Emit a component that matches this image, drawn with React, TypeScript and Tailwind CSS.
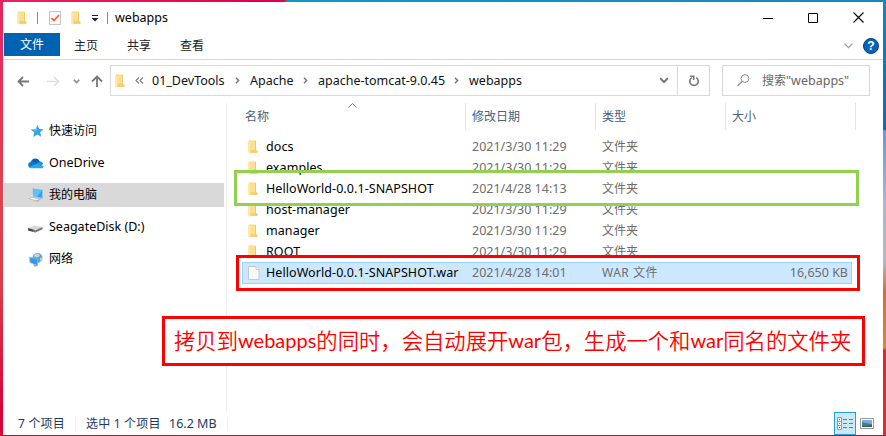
import React from 'react';

const LATIN = "font-['Noto_Sans','Noto_Sans_CJK_SC',sans-serif] text-[12.5px]";
const HAN = "font-['Noto_Sans','Noto_Sans_CJK_SC',sans-serif] text-[12px]";

type Row = { name: string; date: string; type: string; size?: string; selected?: boolean };

const rows: Row[] = [
  { name: 'docs', date: '2021/3/30 11:29', type: '文件夹' },
  { name: 'examples', date: '2021/3/30 11:29', type: '文件夹' },
  { name: 'HelloWorld-0.0.1-SNAPSHOT', date: '2021/4/28 14:13', type: '文件夹' },
  { name: 'host-manager', date: '2021/3/30 11:29', type: '文件夹' },
  { name: 'manager', date: '2021/3/30 11:29', type: '文件夹' },
  { name: 'ROOT', date: '2021/3/30 11:29', type: '文件夹' },
  { name: 'HelloWorld-0.0.1-SNAPSHOT.war', date: '2021/4/28 14:01', type: 'WAR 文件', size: '16,650 KB', selected: true },
];

function Folder() {
  return (
    <svg width="10" height="14" viewBox="0 0 10 14" className="shrink-0">
      <path d="M1 .5h6.500v10.500h2.500v1.500H2z" fill="#f8d780" />
      <path d="M0 1l2.500 1v12L0 12.500z" fill="#ffe9a8" />
      <path d="M2.500 1h5v9h-5z" fill="#fbdf92" />
      <path d="M7 1h1v9.500H7z" fill="#efc868" />
      <path d="M2.500 10h6.500v3H2.500z" fill="#f7cf73" />
    </svg>
  );
}

function FileIcon() {
  return (
    <svg width="12" height="14" viewBox="0 0 12 14" className="shrink-0">
      <path d="M.5.5h7.500l3 3v10H.5z" fill="#f9f9f9" stroke="#c3c7ca" />
      <path d="M8 .5v3h3" fill="#fff" stroke="#c3c7ca" />
    </svg>
  );
}

function Chevron({ down = false }: { down?: boolean }) {
  return down ? (
    <svg width="10" height="7" viewBox="0 0 10 7"><path d="M1.200 1.200L5 5l3.800-3.800" fill="none" stroke="#7a7a7a" strokeWidth="2" /></svg>
  ) : (
    <svg width="5" height="7" viewBox="0 0 5 7"><path d="M1 .8l2.600 2.700L1 6.200" fill="none" stroke="#777" strokeWidth="1.500" /></svg>
  );
}

function Star() {
  return (
    <svg width="14" height="14" viewBox="0 0 14 14">
      <path d="M7.600 1l1.500 4 4.400.3-3.400 3 1.100 4.500-3.800-2.300L3.200 13l1.200-4.600L.8 5.400l4.700-.5z" fill="#2fa3ec" />
      <path d="M7.600 1l-1 6-5.800-1.600 4.700-.5z" fill="#6cc4f6" />
    </svg>
  );
}
function Cloud() {
  return (
    <svg width="16" height="12" viewBox="0 0 16 12">
      <path d="M3 7a4.600 4.600 0 0 1 8.600-3L13 7 4 10z" fill="#0b5fae" />
      <path d="M1 10a3.400 3.400 0 0 1 3-5.500c2 0 4 1.500 6 3L4 11z" fill="#1278cc" />
      <path d="M9 6c2-2.500 6-2 6 1l-4 3z" fill="#1790df" />
      <path d="M1 10l8.500-3.500 6 2.500c.3 1.500-.9 2.300-2 2.300H4C2.400 11.300 1.500 11 1 10z" fill="#28a8ea" />
    </svg>
  );
}
function Computer() {
  return (
    <svg width="16" height="14" viewBox="0 0 16 14">
      <path d="M4.500.3L15 1.800v9.400L5 9z" fill="#9cc0d8" />
      <path d="M5.400 1.300L14 2.600v7L6 8z" fill="#2fa3ee" />
      <path d="M5.400 1.300L14 2.600 9 8.500 6 8z" fill="#5cc2fb" />
      <path d="M.3 10.800L4 9l9 2.300-3.500 2.500z" fill="#a9b1b8" />
      <path d="M1.500 10.700L4 9.600l7 1.700-2 1.300z" fill="#eef0f1" />
    </svg>
  );
}
function Disk() {
  return (
    <svg width="15" height="8" viewBox="0 0 15 8">
      <path d="M0 3l6-2.500 8.500 1.500-7 3.500z" fill="#d7d7d7" />
      <path d="M0 3l7.500 2.200v2.300L0 5.500z" fill="#444" />
      <path d="M7.500 5.200l7-3.200v2.300l-7 3.200z" fill="#777" />
      <path d="M5 6h2" stroke="#70c878" strokeWidth="1" />
    </svg>
  );
}
function Network() {
  return (
    <svg width="14" height="15" viewBox="0 0 14 15">
      <circle cx="8.500" cy="6" r="5" fill="#6a9fbd" />
      <path d="M6 1.500l4 .5 1 2-3 1.500-3-1zM11 6l2.500-1v3l-2 2z" fill="#b9d9e5" />
      <path d="M.5 5l8 2.500v6L1 10.500z" fill="#2c9bed" stroke="#87bfe2" strokeWidth=".7" />
      <path d="M4 13l3-1 2 1.500-3 1.300z" fill="#8ba6b8" />
    </svg>
  );
}

function NavItem({ icon, label, han, active }: { icon: React.ReactNode; label: string; han?: boolean; active?: boolean }) {
  return (
    <div className={`ml-px flex h-6 w-[220px] items-center pl-6 text-black ${active ? 'bg-[#d9d9d9]' : ''}`}>
      <span className="flex w-[21px] items-center">{icon}</span>
      <span className={han ? HAN : LATIN}>{label}</span>
    </div>
  );
}

function Crumb({ label, width }: { label: string; width: string }) {
  return <span className={`${width} shrink-0 ${LATIN}`}>{label}</span>;
}

export default function App() {
  return (
    <div lang="zh-CN" className="relative h-[436px] w-[886px] overflow-hidden whitespace-nowrap bg-[#d8232f] bg-[linear-gradient(180deg,#e82460_0%,#e34351_45%,#dd3c4b_65%,#dc0038_95%)] pl-[3px] leading-[18px]">
      <div className="-ml-[3px] h-[2px] bg-[linear-gradient(90deg,#ee2063_0%,#d90050_32%,#1495cd_32.500%,#1688bd_100%)]" />
      <div className="flex h-[433px]">
        <div className="flex w-[880px] flex-col bg-white">
          <div className="flex h-[31px] items-center pl-[14px]">
            <div className="flex w-[20px]"><Folder /></div>
            <div className="mr-[11px] h-[12px] w-px bg-[#888]" />
            <svg width="12" height="14" viewBox="0 0 12 14"><path d="M.5.5h11v13H.5z" fill="#f8f8f8" stroke="#c4c4c4" /><path d="M2.500 7l2.500 2.500 5-5.500" fill="none" stroke="#eb622b" strokeWidth="1.700" /></svg>
            <div className="ml-[10px] flex w-[20px]"><Folder /></div>
            <svg width="8" height="8" viewBox="0 0 8 8"><path d="M1 1.500h6" stroke="#222" /><path d="M.5 4h7L4 7.500z" fill="#222" /></svg>
            <div className="ml-[8px] mr-[7px] h-[12px] w-px bg-[#888]" />
            <span className={`${LATIN} text-black`}>webapps</span>
            <div className="ml-auto mr-[19px] flex items-center gap-[35px]">
              <svg width="10" height="10" viewBox="0 0 10 10"><path d="M0 5.500h10" stroke="#000" /></svg>
              <svg width="10" height="10" viewBox="0 0 10 10"><path d="M.5.5h9v9h-9z" fill="none" stroke="#000" /></svg>
              <svg width="11" height="11" viewBox="0 0 11 11"><path d="M.5.5l10 10M10.500.5l-10 10" stroke="#000" strokeWidth="1.100" /></svg>
            </div>
          </div>
          <div className={`flex h-[27px] items-start border-b border-[#d8d8d8] pl-px text-[#222] ${HAN}`}>
            <div className="flex h-[23px] w-14 items-center justify-center bg-[#0063b1] pt-px text-white">文件</div>
            <div className="flex h-[25px] items-center gap-[29px] pl-[14px]"><span>主页</span><span>共享</span><span>查看</span></div>
            <div className="ml-auto mr-1 flex h-[26px] items-center gap-[10px]">
              <svg width="9" height="6" viewBox="0 0 9 6"><path d="M.5.7l4 4 4-4" fill="none" stroke="#999" strokeWidth="1.200" /></svg>
              <div className="flex size-4 items-center justify-center rounded-full border border-[#003f87] bg-[#0863bd] font-['Liberation_Sans',sans-serif] text-[12px] font-bold text-white">?</div>
            </div>
          </div>
          <div className="flex h-[43px] items-start pt-[5px] text-[#111]">
            <div className="flex h-[32px] w-[107px] items-center pl-[14px]">
              <svg width="13" height="11" viewBox="0 0 13 11"><path d="M12 5.500H1.500M6 1L1.500 5.500 6 10" fill="none" stroke="#777" strokeWidth="1.800" /></svg>
              <svg className="ml-[17px]" width="13" height="11" viewBox="0 0 13 11"><path d="M0 5.500h11.500M7 1l4.500 4.500L7 10" fill="none" stroke="#ddd" strokeWidth="1.600" /></svg>
              <svg className="ml-[13px]" width="7" height="5" viewBox="0 0 7 5"><path d="M.8.8l2.700 2.700L6.200.8" fill="none" stroke="#888" strokeWidth="1.600" /></svg>
              <svg className="ml-[11px]" width="12" height="12" viewBox="0 0 12 12"><path d="M6 12V1.500M1 6.500l5-5 5 5" fill="none" stroke="#777" strokeWidth="1.800" /></svg>
            </div>
            <div className="flex h-[31px] w-[600px] items-center border border-[#d9d9d9] pl-1">
              <Folder />
              <svg className="ml-[10px] mr-[8px] shrink-0" width="9" height="7" viewBox="0 0 9 7"><path d="M4 .5l-3 3 3 3M8 .5l-3 3 3 3" fill="none" stroke="#777" strokeWidth="1.100" /></svg>
              <Crumb label="01_DevTools" width="w-[83px]" /><Chevron />
              <span className="w-[10px]" /><Crumb label="Apache" width="w-[53px]" /><Chevron />
              <span className="w-[10px]" /><Crumb label="apache-tomcat-9.0.45" width="w-[136px]" /><Chevron />
              <span className="w-[10px]" /><Crumb label="webapps" width="w-[190px]" /><Chevron down />
              <div className="ml-auto flex h-full w-[32px] items-center justify-center border-l border-[#d9d9d9]">
                <svg width="12" height="12" viewBox="0 0 12 12"><path d="M8.200 2.600A4.200 4.200 0 1 1 3.800 2.600M2 1.300h3.700v3.700" fill="none" stroke="#777" strokeWidth="1.600" /></svg>
              </div>
            </div>
            <div className="ml-3 flex h-[31px] w-[148px] items-center border border-[#d9d9d9] pl-[14px] text-[#666]">
              <svg width="13" height="13" viewBox="0 0 13 13"><circle cx="8" cy="4.500" r="3.900" fill="none" stroke="#888" /><path d="M5.200 7.300L.5 12" stroke="#888" strokeWidth="1.200" /></svg>
              <span className={`ml-[12px] ${HAN}`}>搜索<span className="text-[12.5px]">"webapps"</span></span>
            </div>
          </div>
          <div className="flex h-[309px] overflow-hidden">
            <div className="flex w-[224px] shrink-0 flex-col gap-2 border-r border-[#f0f0f0] pt-[16px]">
              <NavItem icon={<span className="ml-[2px]"><Star /></span>} label="快速访问" han />
              <NavItem icon={<Cloud />} label="OneDrive" />
              <NavItem icon={<Computer />} label="我的电脑" han active />
              <NavItem icon={<span className="mt-1"><Disk /></span>} label="SeagateDisk (D:)" />
              <NavItem icon={<span className="ml-px"><Network /></span>} label="网络" han />
            </div>
            <div className="relative flex-1">
              <svg className="absolute left-[121px] top-0" width="9" height="5" viewBox="0 0 9 5"><path d="M.5 4.500l4-4 4 4" fill="none" stroke="#777" /></svg>
              <div className={`flex h-[27px] w-[629px] items-center text-[#4c607a] ${HAN}`}>
                <span className="w-[238px] pl-[18px]">名称</span>
                <span className="flex h-full w-[130px] items-center border-l border-[#e5e5e5] pl-[6px]">修改日期</span>
                <span className="flex h-full w-[130px] items-center border-l border-[#e5e5e5] pl-[6px]">类型</span>
                <span className="flex h-full w-[131px] items-center border-x border-[#e5e5e5] pl-[6px]">大小</span>
              </div>
              <div className="ml-[15px] mt-[6px]">
                {rows.map((r) => (
                  <div key={r.name} className={`flex w-[610px] items-center border pl-[5px] text-[#6d6d6d] ${LATIN} ${r.selected ? 'h-[22px] border-[#99d1ff] bg-[#cce8ff]' : 'h-[21px] border-transparent'}`}>
                    <span className="w-[18px]">{r.selected ? <FileIcon /> : <Folder />}</span>
                    <span className="w-[206px] tracking-[0.07px] text-black">{r.name}</span>
                    <span className="w-[130px]">{r.date}</span>
                    <span className={`w-[130px] text-[12px] ${r.selected ? 'tracking-[0.5px]' : ''}`}>{r.type}</span>
                    <span className="ml-auto pr-[3px]">{r.size}</span>
                  </div>
                ))}
              </div>
            </div>
          </div>
          <div className={`flex h-[23px] items-center pl-[15px] text-[#1e395b] ${HAN}`}>
            <span className="w-[57px] tracking-[0.2px]">7 个项目</span>
            <span className="h-3 w-px bg-[#f0f0f0]" />
            <span className="w-[93px] pl-[10px] tracking-[0.2px]">选中 1 个项目</span>
            <span className={`w-[58px] ${LATIN}`}>16.2 MB</span>
            <span className="h-3 w-px bg-[#f0f0f0]" />
            <div className="ml-auto flex h-[23px] w-[22px] items-center justify-center border border-[#26a0da] bg-[#cbe8f6]">
              <svg width="16" height="13" viewBox="0 0 16 13"><path d="M.5.5h4v12h-4zM.5 4.500h4M.5 8.500h4" fill="#fff" stroke="#999" /><path d="M6 2.500h4M12 2.500h4M6 6.500h4M12 6.500h4M6 10.500h4M12 10.500h4" stroke="#777" /><path d="M2 2h1v1H2z" fill="#555" /><path d="M2 6h1v1H2z" fill="#2a80c0" /><path d="M2 10h1v1H2z" fill="#b22" /></svg>
            </div>
            <svg className="ml-1 mr-[9px]" width="14" height="11" viewBox="0 0 14 11"><path d="M.5.5h13v10H.5z" fill="#fff" stroke="#999" /><path d="M2 2h10v4H2z" fill="#72aee8" /><path d="M2 4l4 1 6 1v3H2z" fill="#547f77" /><path d="M2 8l10-1v2H2z" fill="#315b82" /></svg>
          </div>
        </div>
        <div className="flex-1 bg-[linear-gradient(180deg,#1187bd_0px,#136bae_127px,#6b98d0_129px,#a9b7d5_200px,#b9b5bf_260px,#cf7138_290px,#d38a35_346px,#d62a39_348px,#d73232_433px)]" />
      </div>
      <div className="absolute left-[234px] top-[170px] h-[36px] w-[625px] border-[3px] border-[#92d050]" />
      <div className="absolute left-[236px] top-[255px] h-[36px] w-[624px] border-[3px] border-[#ff0000]" />
      <div className="absolute left-[162px] top-[316px] flex h-[50px] w-[703px] items-center border-[3px] border-[#ff0000] bg-white pb-[2px] pl-[9px] font-['Noto_Sans_CJK_SC',sans-serif] text-[21.33px] leading-[30px] text-[#ff0000]">
        <span className="font-[350]">拷贝到</span>
        <span className="font-['Lato',sans-serif] text-[20px] font-normal">webapps</span>
        <span className="font-[350]">的同时，会自动展开</span>
        <span className="font-['Lato',sans-serif] text-[20px] font-normal">war</span>
        <span className="font-[350]">包，生成一个和</span>
        <span className="font-['Lato',sans-serif] text-[20px] font-normal">war</span>
        <span className="font-[350]">同名的文件夹</span>
      </div>
    </div>
  );
}
